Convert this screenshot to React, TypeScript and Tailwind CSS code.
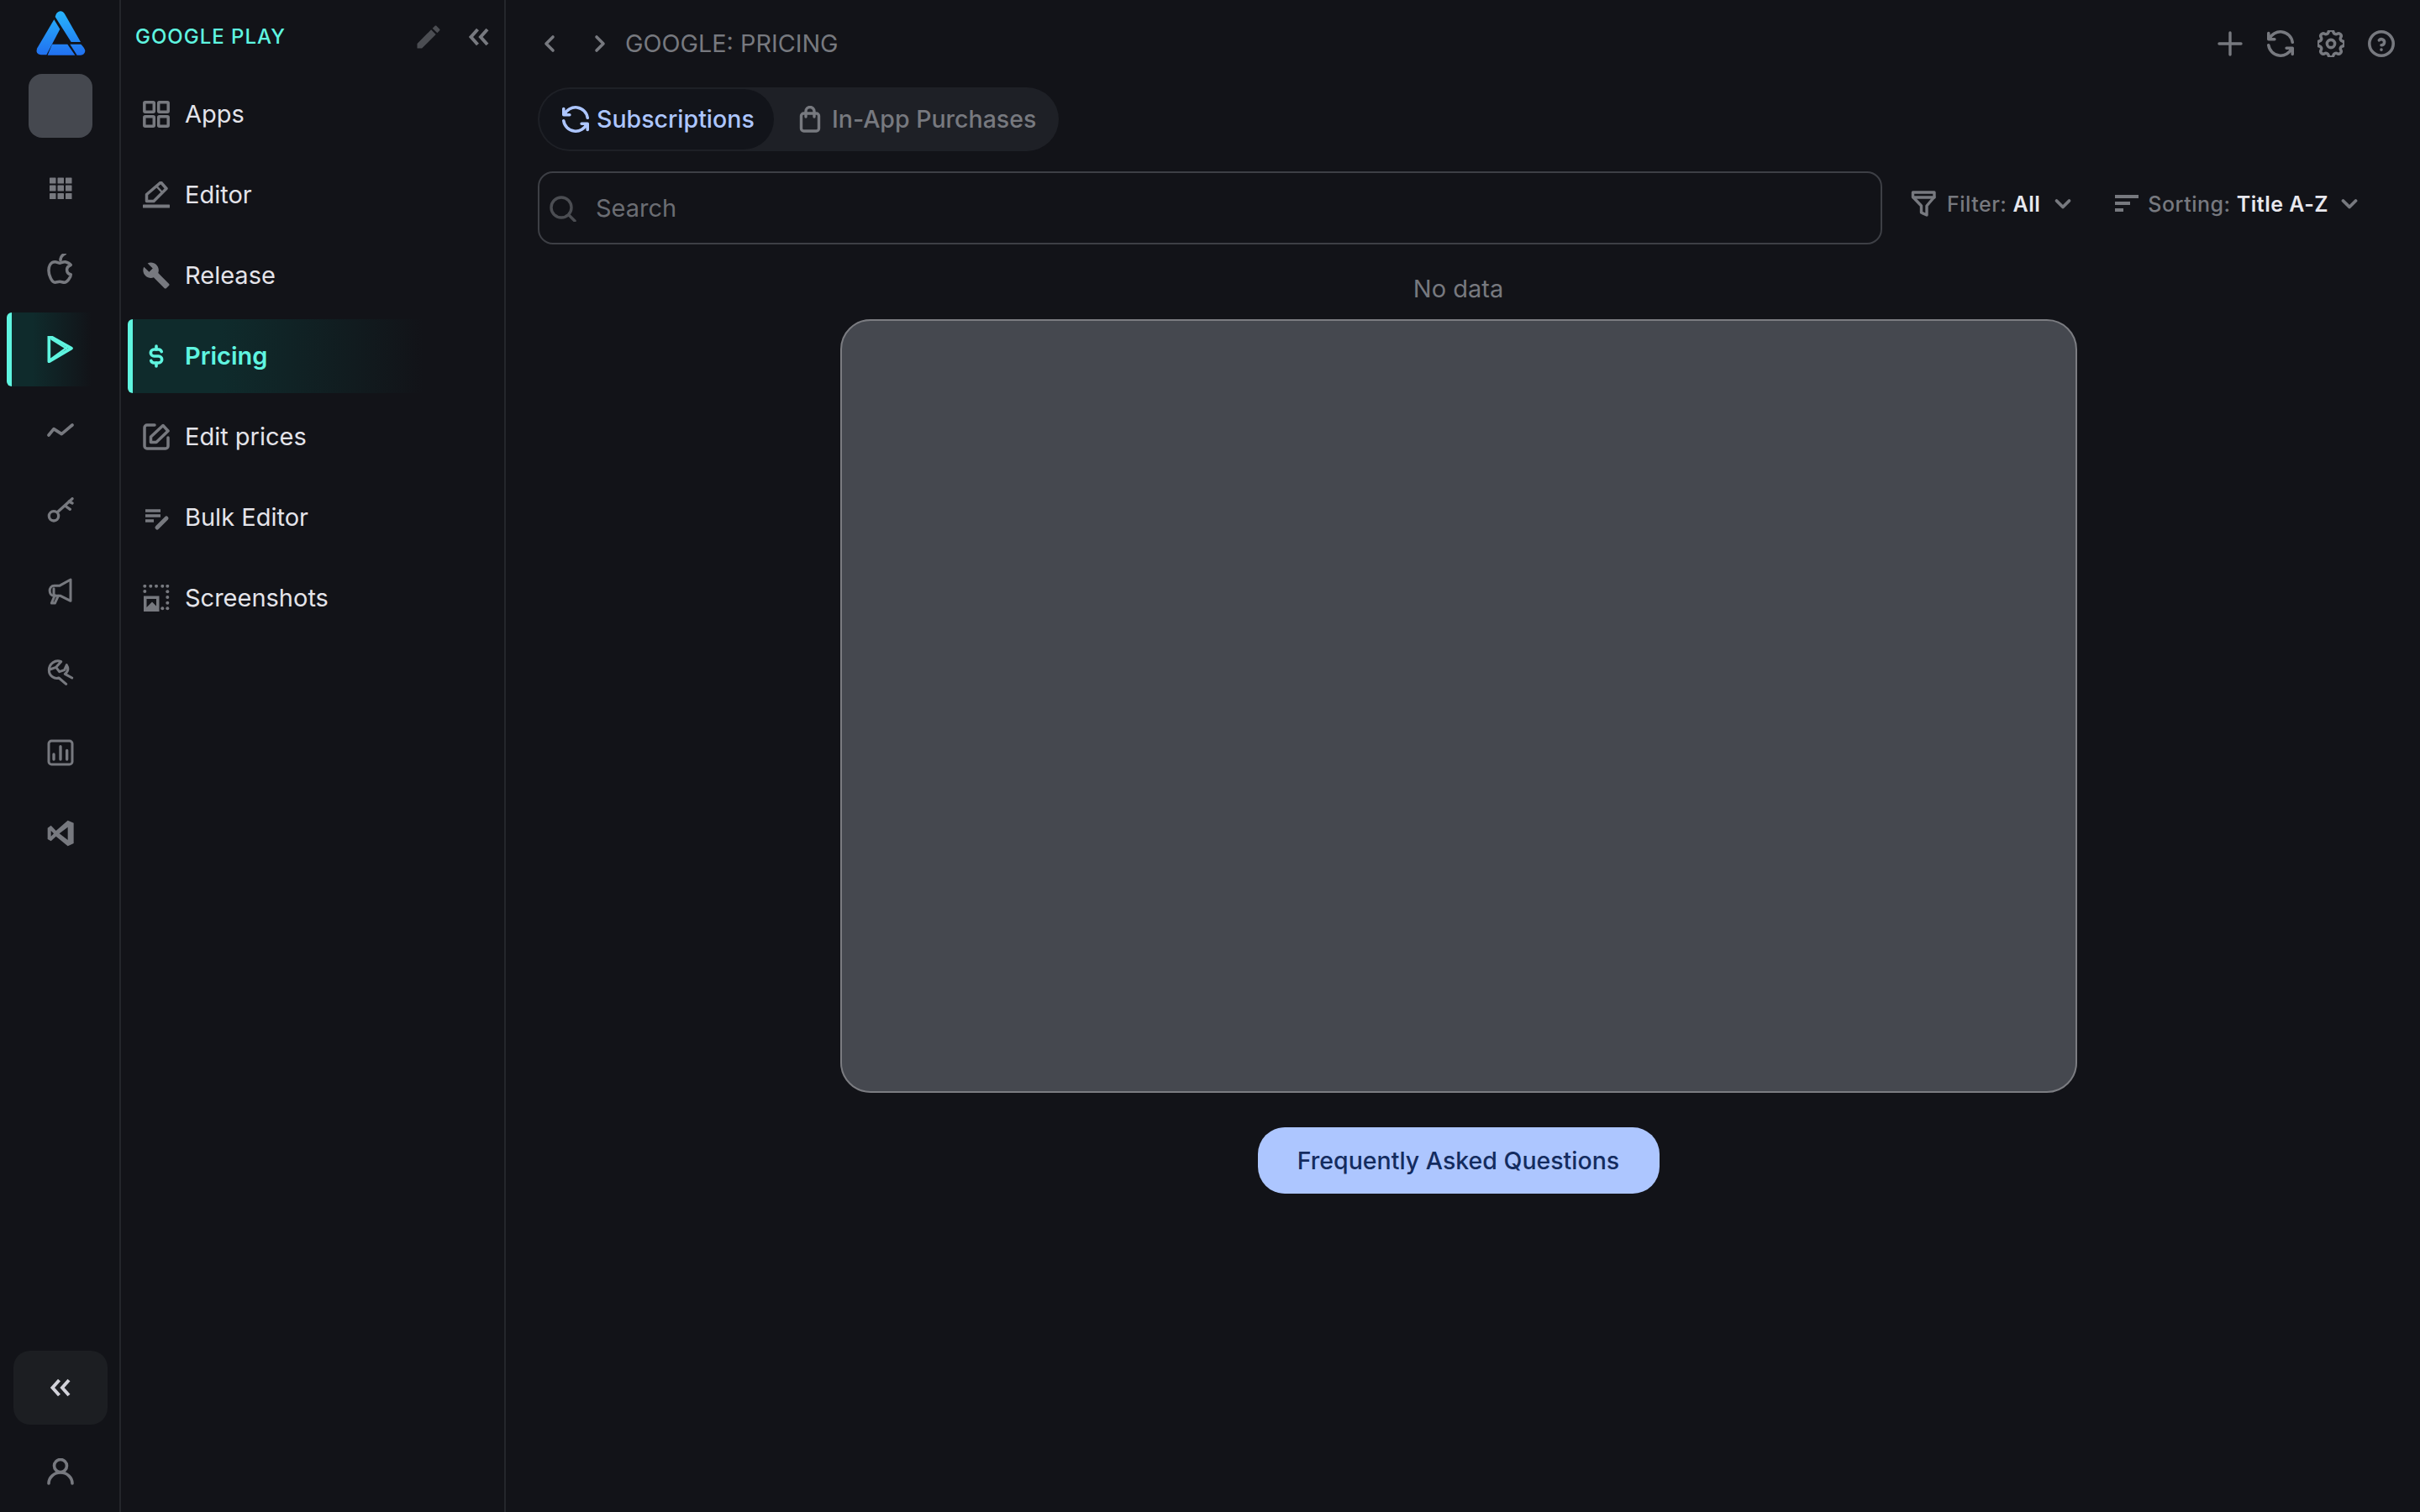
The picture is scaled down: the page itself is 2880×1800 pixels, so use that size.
import React from "react";

const GRAY = "#77797f";

function S({ children, vb = "0 0 32 32", w = 32, h = 32, sw = 3, color = GRAY, className = "" }: { children: React.ReactNode; vb?: string; w?: number; h?: number; sw?: number; color?: string; className?: string }) {
  return (
    <svg width={w} height={h} viewBox={vb} fill="none" stroke={color} strokeWidth={sw} strokeLinecap="round" strokeLinejoin="round" className={"shrink-0 " + className}>
      {children}
    </svg>
  );
}

const REFRESH = (
  <>
    <path d="M20 11a8.1 8.1 0 0 0 -15.5 -2m-.5 -4v4h4" />
    <path d="M4 13a8.1 8.1 0 0 0 15.5 2m.5 4v-4h-4" />
  </>
);

function Logo() {
  return (
    <svg width="84" height="80" viewBox="0 0 252 240" className="shrink-0">
      <defs>
        <linearGradient id="lg" x1="0" y1="25" x2="0" y2="183" gradientUnits="userSpaceOnUse">
          <stop offset="0" stopColor="#27b4fb" />
          <stop offset="1" stopColor="#2170f0" />
        </linearGradient>
      </defs>
      <g fill="url(#lg)">
        <path d="M107 45 Q111 27 125 25 Q136 25 143 38 L198 135 L164 135 Z" />
        <path d="M103 55 L124 89 L76 181 L56 181 Q36 178 42 158 Z" />
        <path d="M96 143 L151 143 L178 182 L80 182 Z" />
        <path d="M160 143 L199 143 Q214 158 214 167 Q212 180 198 182 L185 182 Z" />
      </g>
    </svg>
  );
}

const railIcons: React.ReactNode[] = [
  <svg key="g" width="32" height="32" viewBox="0 0 32 32" fill={GRAY}>
    {[3, 12.5, 22].map((x) => [3.5, 12.5, 22].map((y) => <rect key={x + "-" + y} x={x} y={y} width="7.5" height="7" rx="0.6" />))}
  </svg>,
  <S key="a" vb="3 1.5 18 20.5" w={32} h={36} sw={2}>
    <path d="M8.286 7.008c-3.216 0 -4.286 3.23 -4.286 5.92c0 3.229 2.143 8.072 4.286 8.072c1.165 -.05 1.799 -.538 3.214 -.538c1.406 0 1.607 .538 3.214 .538s4.286 -3.229 4.286 -5.381c-.03 -.011 -2.649 -.434 -2.679 -3.23c-.02 -2.335 2.589 -3.179 2.679 -3.23c-1.096 -1.606 -3.162 -2.038 -3.75 -2.152c-1.636 -.157 -3.054 .947 -3.75 .947c-.696 0 -2.048 -.947 -3.214 -.947z" />
    <path d="M12 6 C12 4 13 2.5 15 1.5" />
  </S>,
  <S key="p" vb="48 31 96 96" w={32} h={32} sw={11} color="#5ff5e0">
    <path d="M55 30 L135 75 L55 122 Z" />
    <path d="M58 116 L122 70 M64 42 L118 76" strokeWidth={7} />
  </S>,
  <S key="t" vb="48 316 96 96" sw={11}>
    <path d="M54 382 L72 360 L100 378 L138 346" />
  </S>,
  <S key="k" vb="48 605 96 96" sw={10}>
    <circle cx="72" cy="672" r="17" />
    <path d="M85 658 L138 610 M112 635 L130 648 M126 620 L138 626" />
  </S>,
  <S key="m" vb="48 22 96 96" sw={9}>
    <path d="M132 28 V104 L96 86 H74 C52 86 52 50 74 50 H92 Z" />
    <path d="M88 86 L76 112 H64 L76 84 M72 60 V78" />
  </S>,
  <S key="w" vb="48 309 96 96" sw={9}>
    <path d="M98 320 C78 310 55 328 55 350 C55 372 76 384 90 378 L116 400 M98 320 L80 340 M58 348 L80 340 L92 356 L110 350 L118 332 C126 345 122 356 112 364 L137 378" />
  </S>,
  <S key="c" vb="48 598 96 96" sw={9}>
    <rect x="54" y="604" width="84" height="84" rx="10" />
    <path d="M72 652 V670 M96 624 V670 M119 638 V670" strokeWidth={10} />
  </S>,
  <svg key="v" width="32" height="32" viewBox="48 886 96 96" fill={GRAY}>
    <path fillRule="evenodd" d="M122 888 L143 897 V970 L122 980 L80 945 L62 962 L50 955 V915 L62 906 L80 925 Z M122 912 L92 935 L122 958 Z M62 925 V945 L72 935 Z" />
  </svg>,
];

const navIcons: React.ReactNode[] = [
  <S key="a" sw={3.5}>
    <rect x="1.8" y="1.8" width="11.5" height="11.5" rx="1" />
    <rect x="18.7" y="1.8" width="11.5" height="11.5" rx="1" />
    <rect x="1.8" y="18.7" width="11.5" height="11.5" rx="1" />
    <rect x="18.7" y="18.7" width="11.5" height="11.5" rx="1" />
  </S>,
  <S key="e" sw={3.5}>
    <path d="M21.5 1 L28 8.5 L13 23.5 H4.5 V15.5 Z" />
    <path d="M16.5 6 L23 13" strokeWidth={2.5} />
    <path d="M1 29.5 H31" strokeWidth={4} />
  </S>,
  <svg key="r" width="34" height="34" viewBox="0 0 24 24" fill={GRAY} className="shrink-0 -mx-[1px]">
    <path d="M22.7 19l-9.1-9.1c.9-2.3.4-5-1.5-6.9-2-2-5-2.4-7.4-1.3L9 6 6 9 1.6 4.7C.4 7.1.9 10.1 2.9 12.1c1.9 1.9 4.6 2.4 6.9 1.5l9.1 9.1c.4.4 1 .4 1.4 0l2.3-2.3c.5-.4.5-1.1.1-1.4z" />
  </svg>,
  <S key="d" vb="0 0 24 24" sw={2.7} color="#5ff5e0">
    <path d="M16.7 8a3 3 0 0 0 -2.7 -2h-4a3 3 0 0 0 0 6h4a3 3 0 0 1 0 6h-4a3 3 0 0 1 -2.7 -2" />
    <path d="M12 3v3m0 12v3" />
  </S>,
  <S key="ep" sw={3.5}>
    <path d="M14 2H5A3 3 0 0 0 2 5v22A3 3 0 0 0 5 30h22a3 3 0 0 0 3-3V17" />
    <path d="M24 2.5 L30 9 L16 22.5 H9.5 V16 Z" />
  </S>,
  <S key="b" sw={3.5}>
    <path d="M3 8 H21 M3 14 H21 M3 20 H13" strokeLinecap="butt" />
    <path d="M17 28 L28 17" strokeWidth={5} />
  </S>,
  <svg key="s" width="32" height="32" viewBox="0 0 32 32" fill={GRAY} className="shrink-0">
    {[[2.3, 1.8], [9.3, 1.8], [16, 1.8], [23.3, 1.8], [29.3, 1.8], [2.3, 8], [29.3, 8.3], [29.3, 15], [29.3, 21.7], [29.3, 28.3], [23.3, 28.3]].map(([x, y]) => (
      <circle key={x + "-" + y} cx={x} cy={y} r="2" />
    ))}
    <path fillRule="evenodd" d="M1 13.5 H19.5 V32 H1 Z M4.5 17 V27 L11 20.5 L16 25.5 V17 Z" />
  </svg>,
];

const navLabels = ["Apps", "Editor", "Release", "Pricing", "Edit prices", "Bulk Editor", "Screenshots"];

function Chevrons({ color }: { color: string }) {
  return (
    <S color={color} sw={4}>
      <path d="M14.5 7 L6.5 16 L14.5 25 M26 7 L18 16 L26 25" strokeLinecap="butt" strokeLinejoin="miter" />
    </S>
  );
}

function SmallChevron() {
  return (
    <S w={24} h={24} vb="0 0 24 24" sw={3.8} className="ml-[4px]">
      <path d="M4.5 8 L12 15.5 L19.5 8" />
    </S>
  );
}

export default function App() {
  return (
    <div className="flex h-[1800px] w-[2880px] overflow-hidden bg-[#121318] font-['Inter',sans-serif]">
      {/* rail */}
      <aside className="flex w-[144px] shrink-0 flex-col items-center border-r-2 border-[#24262b] pl-[2px] pt-[5px]">
        <Logo />
        <div className="mt-[3px] h-[76px] w-[76px] rounded-[16px] bg-[#45484f]" />
        <div className="mt-[16px] flex w-full flex-col gap-[8px] pl-[6px]">
          {railIcons.map((ic, i) => (
            <div
              key={i}
              className={
                "flex h-[88px] w-[128px] items-center justify-center " +
                (i === 2 ? "rounded-l-[6px] border-l-[6px] border-[#5ff5e0] bg-[linear-gradient(90deg,#0f2b2c_0%,#0f2b2c_20%,#121318_78%)] pr-[6px]" : "")
              }
            >
              {ic}
            </div>
          ))}
        </div>
        <div className="mt-auto flex h-[88px] w-[112px] items-center justify-center rounded-[20px] bg-[#1c1e22]">
          <Chevrons color="#d2d2da" />
        </div>
        <div className="mt-[40px] mb-[32px]">
          <S sw={3.6}>
            <circle cx="16" cy="9" r="7.5" />
            <path d="M2 30 A14 13 0 0 1 30 30" />
          </S>
        </div>
      </aside>

      {/* secondary panel */}
      <aside className="flex w-[458px] shrink-0 flex-col border-r-2 border-[#24262b]">
        <div className="flex h-[92px] items-start justify-between pl-[17px] pr-[14px] pt-[28px]">
          <span className="mt-[1px] text-[24px] font-medium leading-[30px] tracking-[1px] text-[#5ff5e0]">GOOGLE PLAY</span>
          <div className="flex items-center gap-[28px]">
            <svg width="36" height="36" viewBox="0 0 24 24" fill="#4b4d52" className="-my-[2px] -ml-[2px] -mr-[2px] shrink-0">
              <path d="M3 17.25V21h3.75L17.81 9.94l-3.75-3.75L3 17.25zM20.71 7.04c.39-.39.39-1.02 0-1.41l-2.34-2.34c-.39-.39-1.02-.39-1.41 0l-1.83 1.83 3.75 3.75 1.83-1.83z" />
            </svg>
            <Chevrons color={GRAY} />
          </div>
        </div>
        <nav className="flex flex-col gap-[8px] pl-[8px]">
          {navLabels.map((l, i) => (
            <div
              key={l}
              className={
                "flex h-[88px] w-[352px] items-center gap-[18px] text-[29px] leading-[36px] " +
                (i === 3
                  ? "rounded-l-[6px] border-l-[6px] border-[#5ff5e0] bg-[linear-gradient(90deg,#0f2b2c_0%,#0f2b2c_30%,#121318_100%)] pl-[12px] font-semibold text-[#5ff5e0]"
                  : "pl-[18px] font-normal text-[#e4e4ea]")
              }
            >
              {navIcons[i]}
              <span>{l}</span>
            </div>
          ))}
        </nav>
      </aside>

      {/* main */}
      <main className="flex min-w-0 flex-1 flex-col">
        <div className="flex h-[104px] items-center justify-between pl-[36px] pr-[30px]">
          <div className="flex items-center">
            <S sw={3.6}><path d="M20 8 L12 16 L20 24" /></S>
            <S sw={3.6} className="ml-[28px]"><path d="M12 8 L20 16 L12 24" /></S>
            <span className="ml-[14px] text-[28.8px] leading-[36px] text-[#77797f]">GOOGLE: PRICING</span>
          </div>
          <div className="flex items-center gap-[28px]">
            <S sw={3.4}><path d="M16 3 V29 M3 16 H29" /></S>
            <S vb="3 3 18 18" sw={2}>{REFRESH}</S>
            <S vb="3 3 18 18" sw={2}>
              <path d="M10.325 4.317c.426 -1.756 2.924 -1.756 3.35 0a1.724 1.724 0 0 0 2.573 1.066c1.543 -.94 3.31 .826 2.37 2.37a1.724 1.724 0 0 0 1.065 2.572c1.756 .426 1.756 2.924 0 3.35a1.724 1.724 0 0 0 -1.066 2.573c.94 1.543 -.826 3.31 -2.37 2.37a1.724 1.724 0 0 0 -2.572 1.065c-.426 1.756 -2.924 1.756 -3.35 0a1.724 1.724 0 0 0 -2.573 -1.066c-1.543 .94 -3.31 -.826 -2.37 -2.37a1.724 1.724 0 0 0 -1.065 -2.572c-1.756 -.426 -1.756 -2.924 0 -3.35a1.724 1.724 0 0 0 1.066 -2.573c-.94 -1.543 .826 -3.31 2.37 -2.37c1 .608 2.296 .07 2.572 -1.065z" />
              <circle cx="12" cy="12" r="2.6" />
            </S>
            <S vb="3 3 18 18" sw={2}>
              <circle cx="12" cy="12" r="8" />
              <path d="M12 16v.01 M12 13a2 2 0 0 0 .914 -3.782a1.98 1.98 0 0 0 -2.414 .483" />
            </S>
          </div>
        </div>

        <div className="ml-[38px] mr-[49px] flex flex-col">
          <div className="flex h-[76px] w-[620px] items-center rounded-[38px] bg-[#1e2026] p-[2px]">
            <div className="flex h-[72px] w-[279px] items-center gap-[9px] rounded-[36px] bg-[#12141a] pl-[27px] text-[#adc6ff]">
              <S vb="3 3 18 18" sw={2} color="#adc6ff">{REFRESH}</S>
              <span className="text-[28.5px] font-medium leading-[36px]">Subscriptions</span>
            </div>
            <div className="ml-[27px] flex items-center gap-[10px] text-[#77797f]">
              <S sw={3.4}>
                <rect x="5.5" y="9" width="21" height="21" rx="3" />
                <path d="M11 13 V6.5 a5 5 0 0 1 10 0 V13" />
              </S>
              <span className="text-[28.5px] font-medium leading-[36px]">In-App Purchases</span>
            </div>
          </div>

          <div className="mt-[24px] flex items-start">
            <div className="flex h-[87px] w-[1600px] items-center gap-[23px] rounded-[18px] border-2 border-[#3d3f45] pl-[12px]">
              <S color="#4b4d52" sw={3.4}>
                <circle cx="14" cy="15" r="12" />
                <path d="M23 24 L30 31" />
              </S>
              <span className="text-[29px] leading-[36px] text-[#6b6d73]">Search</span>
            </div>
            <div className="ml-[34px] mt-[23px] flex h-[32px] items-center gap-[11px]">
              <S sw={3.4}>
                <path d="M2.5 2 H28 V7.5 L19 18 V29 L12.5 26 V18 L2.5 7.5 Z" />
                <path d="M3 8 H28" />
              </S>
              <span className="text-[25px] font-medium leading-[32px] tracking-[0.5px] text-[#77797f]">
                Filter: <span className="font-semibold text-[#e8e8ee]">All</span>
              </span>
              <SmallChevron />
            </div>
            <div className="ml-[48px] mt-[23px] flex h-[32px] items-center gap-[9px]">
              <svg width="32" height="32" viewBox="0 0 32 32" fill={GRAY} className="shrink-0">
                <rect x="2" y="5" width="28" height="4" />
                <rect x="2" y="13" width="18" height="4" />
                <rect x="2" y="21" width="10" height="4" />
              </svg>
              <span className="text-[25px] font-medium leading-[32px] tracking-[0.5px] text-[#77797f]">
                Sorting: <span className="font-semibold text-[#e8e8ee]">Title A-Z</span>
              </span>
              <SmallChevron />
            </div>
          </div>

          <div className="flex flex-col items-center">
            <div className="mt-[36px] text-[29px] leading-[34px] text-[#77797f]">No data</div>
            <div className="mt-[19px] h-[921px] w-[1472px] rounded-[36px] border-2 border-[#7b7c81] bg-[#45484f]" />
            <div className="mt-[41px] flex h-[79px] w-[478px] items-center justify-center rounded-[32px] bg-[#adc6ff] text-[28.5px] font-medium leading-[36px] text-[#142c5f]">
              Frequently Asked Questions
            </div>
          </div>
        </div>
      </main>
    </div>
  );
}
